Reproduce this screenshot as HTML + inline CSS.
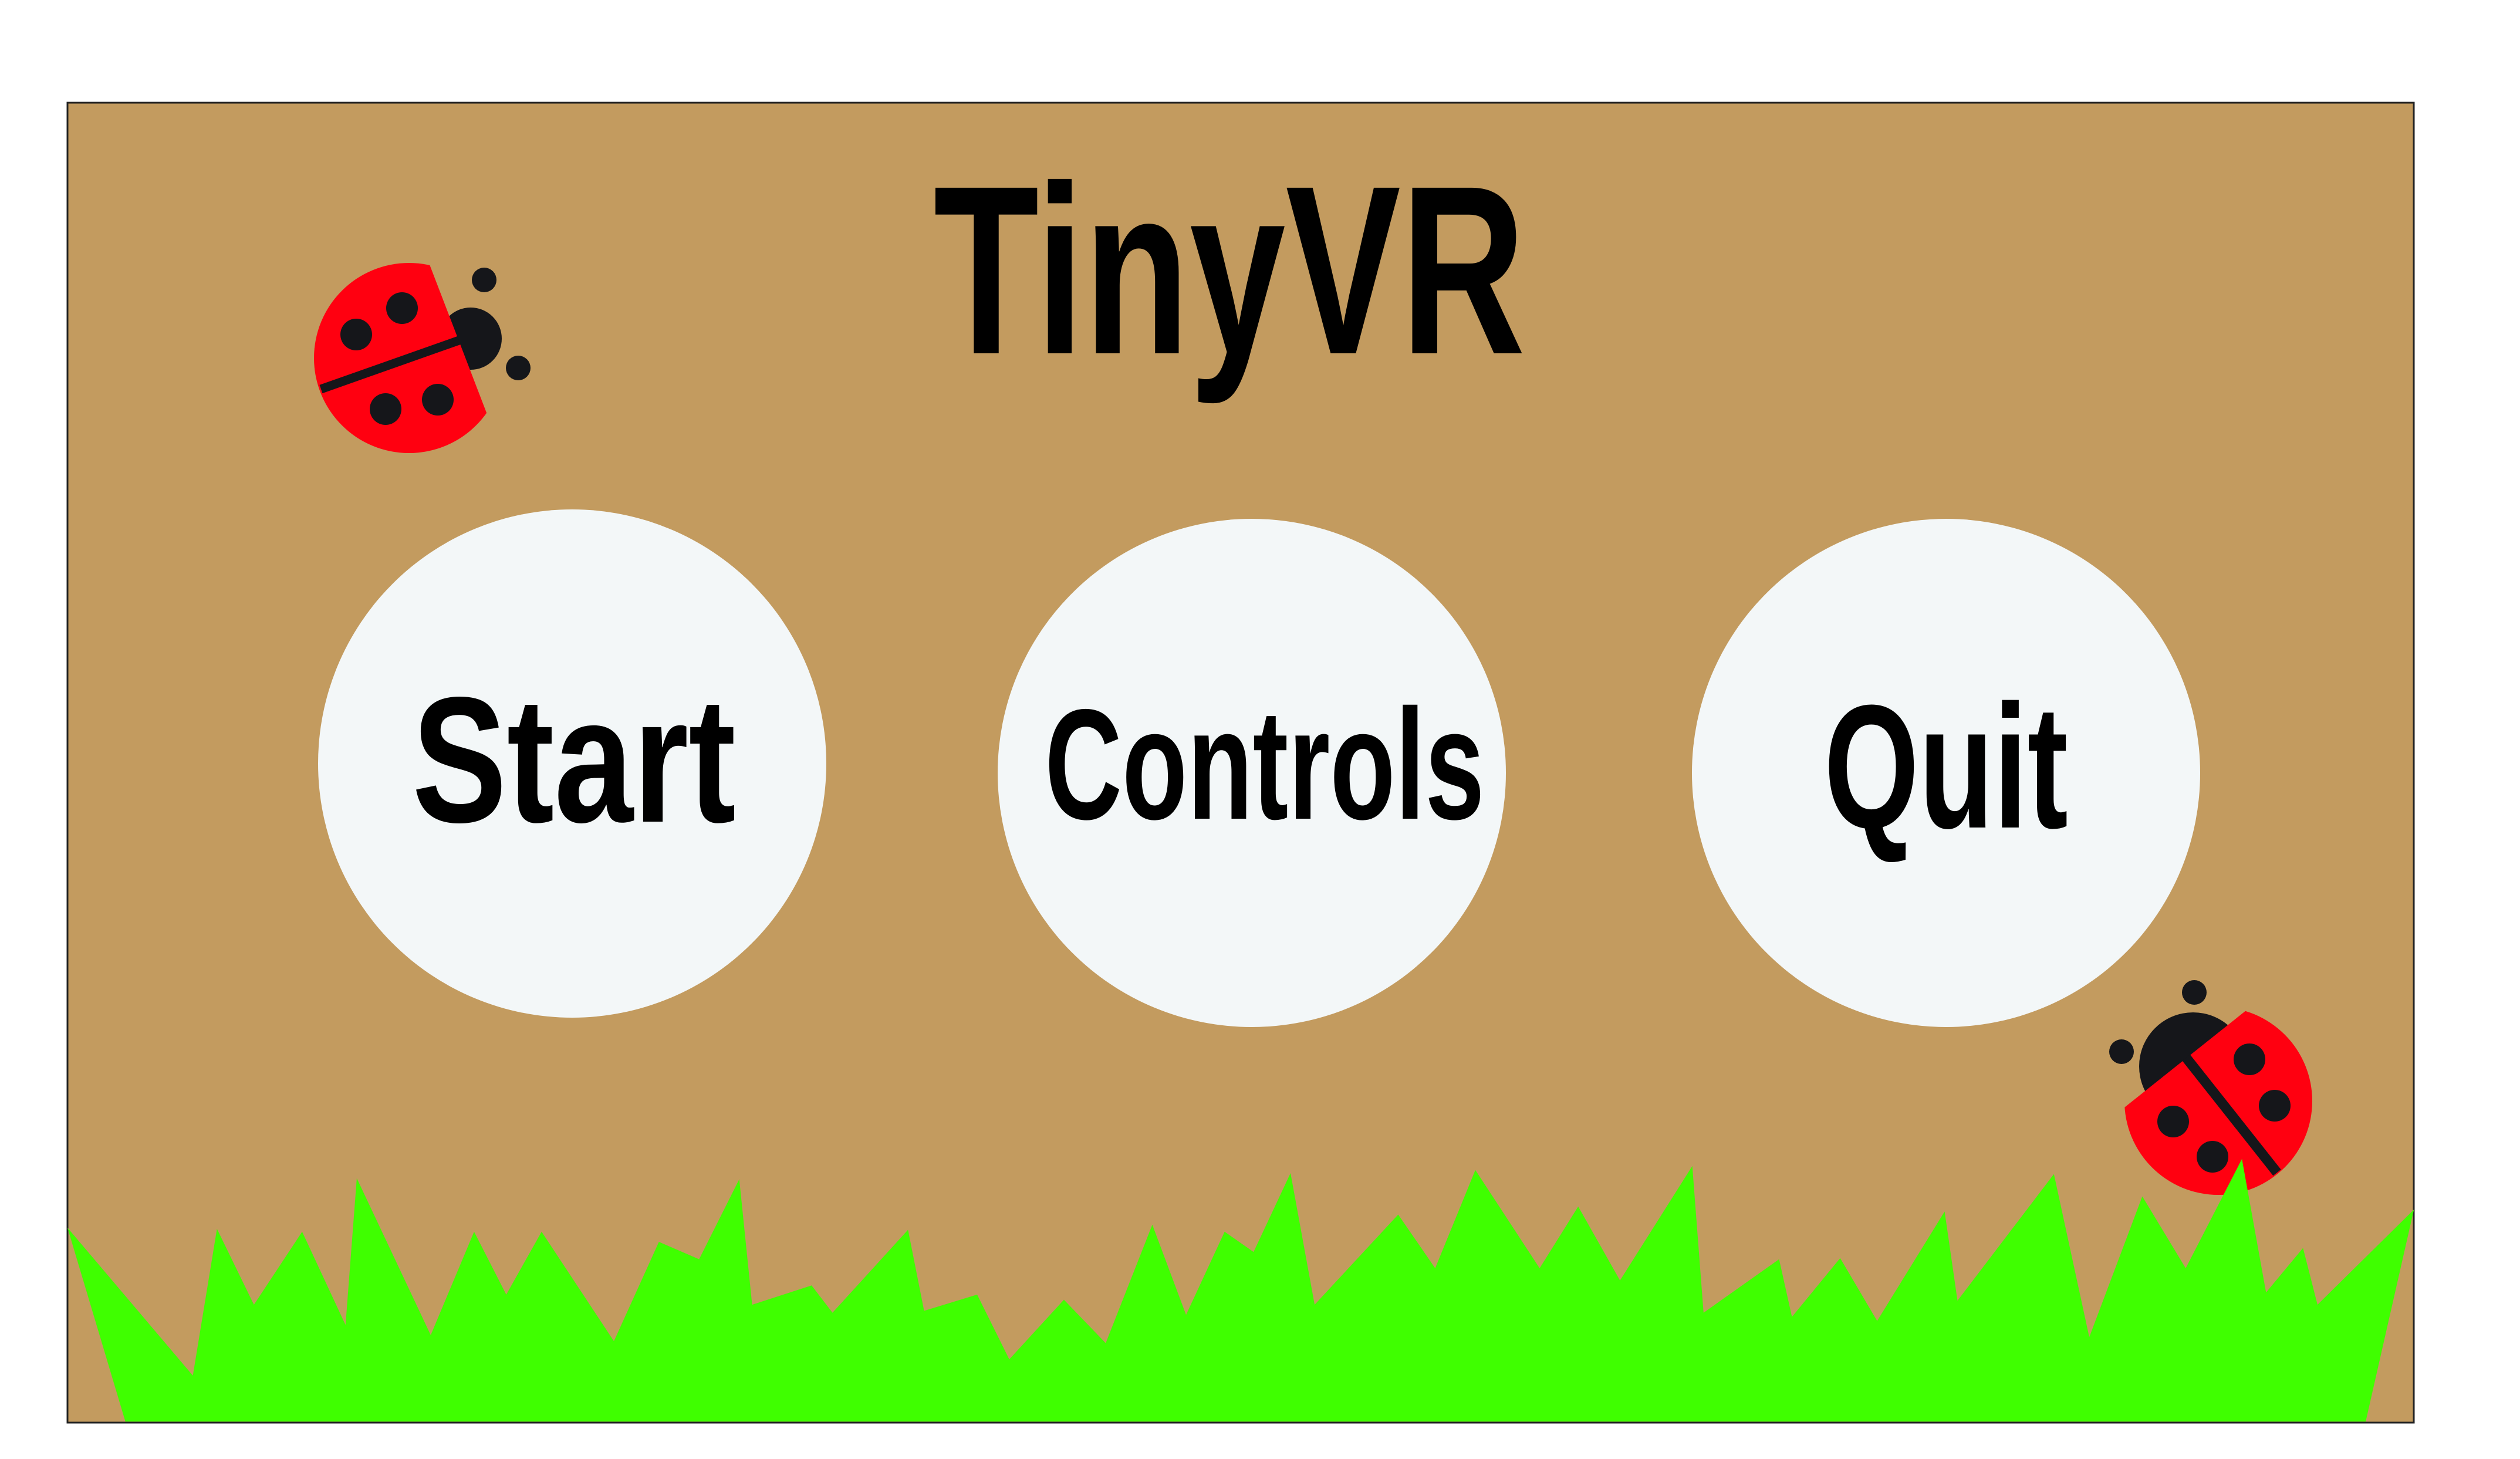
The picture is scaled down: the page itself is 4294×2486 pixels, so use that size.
<!DOCTYPE html>
<html><head><meta charset="utf-8"><style>
html,body{margin:0;padding:0;background:#fff;width:4294px;height:2486px;overflow:hidden}
svg{display:block}
text{font-family:"Liberation Sans",sans-serif;font-weight:bold;fill:#000}
</style></head><body>
<svg width="4294" height="2486" viewBox="0 0 4294 2486" xmlns="http://www.w3.org/2000/svg">
<defs>
<clipPath id="c1"><polygon points="674,300 890,862 400,862 400,300"/></clipPath>
<clipPath id="c2"><polygon points="3221,2205 4231,1400 4400,1600 4400,2400 3221,2400"/></clipPath>
</defs>
<rect x="115" y="175" width="3998" height="2249" fill="#C39B5F" stroke="#222" stroke-width="3"/>

<g transform="translate(2095,602) scale(0.718,1)"><text x="0" y="0" font-size="410" text-anchor="middle">TinyVR</text></g>

<circle cx="975" cy="1301" r="433" fill="#F3F7F8"/>
<circle cx="2133" cy="1317" r="433" fill="#F3F7F8"/>
<circle cx="3316" cy="1317" r="433" fill="#F3F7F8"/>

<g transform="translate(978,1400) scale(0.794,1)"><text x="0" y="0" font-size="305" text-anchor="middle">Start</text></g>
<g transform="translate(2155,1395) scale(0.68,1)"><text x="0" y="0" font-size="268" text-anchor="middle">Controls</text></g>
<g transform="translate(3316,1410) scale(0.693,1)"><text x="0" y="0" font-size="300" text-anchor="middle">Quit</text></g>

<!-- ladybug 1 -->
<g fill="#15161A">
<circle cx="802" cy="577" r="53"/>
<circle cx="825" cy="477" r="21"/>
<circle cx="883" cy="627" r="21"/>
</g>
<circle cx="697" cy="610" r="162" fill="#FF0010" clip-path="url(#c1)"/>
<line x1="547" y1="663" x2="782" y2="580" stroke="#15161A" stroke-width="15"/>
<g fill="#15161A">
<circle cx="685" cy="525" r="27"/><circle cx="607" cy="570" r="27"/>
<circle cx="657" cy="697" r="27"/><circle cx="746" cy="681" r="27"/>
</g>

<!-- ladybug 2 -->
<g fill="#15161A">
<circle cx="3737" cy="1817" r="92"/>
<circle cx="3739" cy="1691" r="21"/>
<circle cx="3615" cy="1792" r="21"/>
</g>
<circle cx="3780" cy="1876" r="160" fill="#FF0010" clip-path="url(#c2)"/>
<line x1="3725" y1="1802" x2="3880" y2="1998" stroke="#15161A" stroke-width="17"/>
<g fill="#15161A">
<circle cx="3833" cy="1805" r="27"/><circle cx="3876" cy="1884" r="27"/>
<circle cx="3703" cy="1911" r="27"/><circle cx="3770" cy="1971" r="27"/>
</g>

<g transform="scale(2.7385)">
<polygon fill="#3FFF00" points="42,763.9 120,855.9 135,764.6 158,811.8 188,766.4 215,824.4 222,733.1 268,830.7 295,766.4 315,805.5 337,766.4 382,834.5 410,772.7 435,783.5 460,733.7 468,811.8 505,799.8 518,816.8 565,765.2 575,815.6 608,805.5 628,845.8 662,808.7 688,835.7 717,762 738,818.1 762,766.4 780,779 803,729.9 818,811.8 870,755.7 893,789.1 918,728 958,789.1 982,750.7 1008,796.7 1053,725.5 1060,816.8 1107,783.5 1115,819.4 1145,782.8 1168,821.9 1210,753.8 1218,809.3 1278,730.5 1300,832 1333,744.4 1360,789.1 1395,721.1 1410,804.2 1433,776.5 1442,811.8 1502,752.6 1472,884.5 78,884.5"/>
</g>
</svg>
</body></html>
